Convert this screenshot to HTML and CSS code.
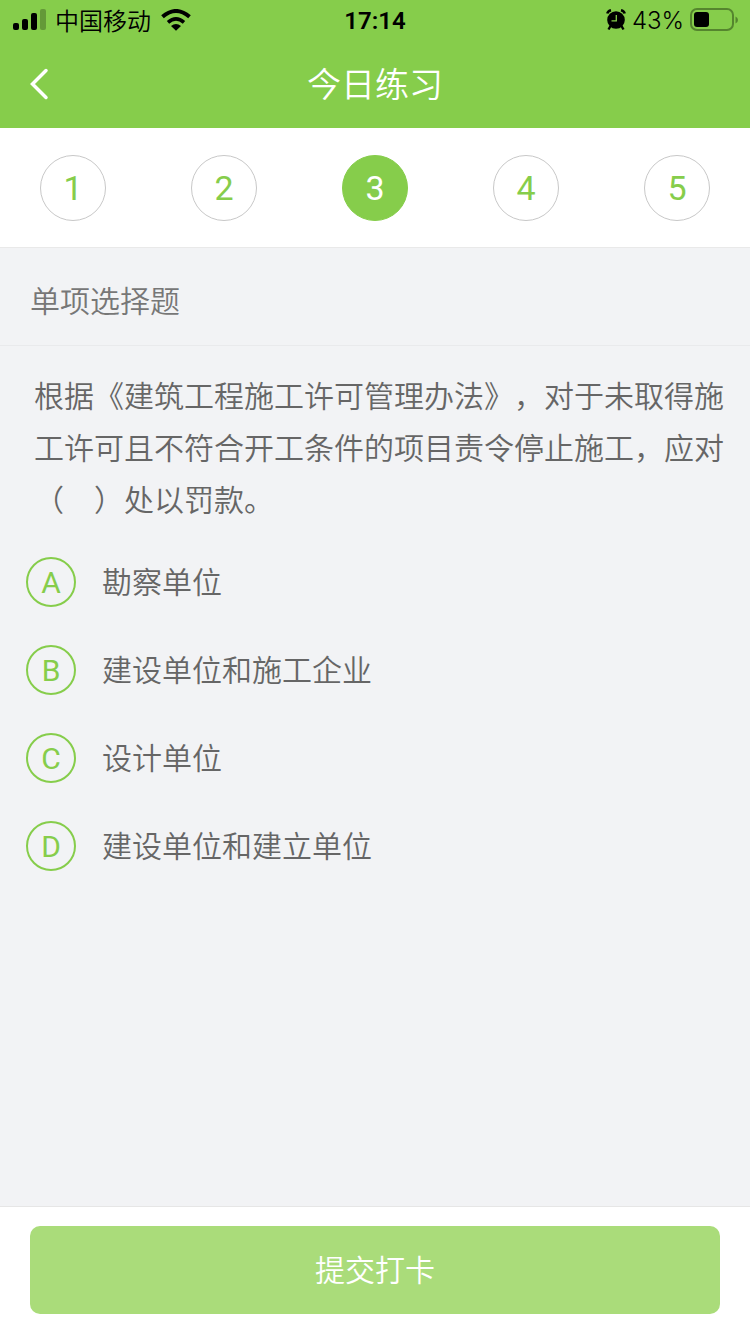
FILE: index.html
```html
<!DOCTYPE html>
<html lang="zh-CN">
<head>
<meta charset="utf-8">
<meta name="viewport" content="width=device-width, initial-scale=1">
<title>今日练习</title>
<link rel="stylesheet" href="styles.css">
</head>
<body>
<div class="app">
  <header class="header">
    <div class="status">
      <div class="status-side">
        <svg class="signal" width="34" height="22" viewBox="0 0 34 22" aria-hidden="true">
          <rect x="1" y="14" width="6" height="7" rx="2"/>
          <rect x="10" y="10" width="6" height="11" rx="2"/>
          <rect x="19" y="4" width="6" height="17" rx="2"/>
          <rect x="28" y="0" width="6" height="21" rx="2" opacity=".25"/>
        </svg>
        <span class="carrier">中国移动</span>
        <svg class="wifi" width="32" height="22" viewBox="0 0 32 22" fill="none" stroke="#000" aria-hidden="true">
          <path d="M2.500 7.800Q16-3.800 29.500 7.800" stroke-width="4"/>
          <path d="M8 13.300Q16 6.500 24 13.300" stroke-width="3.600"/>
          <path d="M16 21.800L11 17Q16 12.800 21 17Z" fill="#000" stroke="none"/>
        </svg>
      </div>
      <time class="clock">17:14</time>
      <div class="status-side status-right">
        <svg width="20" height="22" viewBox="0 0 20 22" aria-hidden="true">
          <circle cx="10" cy="11" r="8.800"/>
          <path d="M1.300 4.500Q2 2 5 1.300M18.700 4.500Q18 2 15 1.300" fill="none" stroke="#000" stroke-width="2.600"/>
          <path d="M4.500 17L2.500 20.500M15.500 17L17.500 20.500" stroke="#000" stroke-width="2.400"/>
          <path d="M10.300 6V11.800H5.500" fill="none" stroke="#86cd4b" stroke-width="1.300"/>
        </svg>
        <span class="percent">43%</span>
        <svg class="battery" width="48" height="24" viewBox="0 0 48 24" aria-hidden="true">
          <rect x="1" y="1" width="42" height="21" rx="6" fill="none" stroke="#55852e" stroke-width="2"/>
          <rect x="4" y="4" width="15" height="15" rx="3"/>
          <path d="M45.500 8.500Q48 9.500 48 12T45.500 15.500Z" fill="#55852e"/>
        </svg>
      </div>
    </div>
    <div class="titlebar">
      <button class="back" type="button" aria-label="返回">
        <svg width="20" height="32" viewBox="0 0 20 32" fill="none" stroke="#fff" stroke-width="3.500" stroke-linecap="round" aria-hidden="true">
          <path d="M16 2.500L2.500 16L16 29.500"/>
        </svg>
      </button>
      <h1 class="title">今日练习</h1>
    </div>
  </header>

  <nav class="steps" aria-label="题目">
    <button class="step" type="button">1</button>
    <button class="step" type="button">2</button>
    <button class="step step-current" type="button" aria-current="step">3</button>
    <button class="step" type="button">4</button>
    <button class="step" type="button">5</button>
  </nav>

  <main class="main">
    <h2 class="kind">单项选择题</h2>
    <p class="question" id="question">根据《建筑工程施工许可管理办法》，对于未取得施工许可且不符合开工条件的项目责令停止施工，应对（&#12288;）处以罚款。</p>
    <div class="options" role="radiogroup" aria-labelledby="question">
      <label class="option">
        <span class="badge"><input class="radio" type="radio" name="answer" value="A"><span class="letter">A</span></span>
        <span>勘察单位</span>
      </label>
      <label class="option">
        <span class="badge"><input class="radio" type="radio" name="answer" value="B"><span class="letter">B</span></span>
        <span>建设单位和施工企业</span>
      </label>
      <label class="option">
        <span class="badge"><input class="radio" type="radio" name="answer" value="C"><span class="letter">C</span></span>
        <span>设计单位</span>
      </label>
      <label class="option">
        <span class="badge"><input class="radio" type="radio" name="answer" value="D"><span class="letter">D</span></span>
        <span>建设单位和建立单位</span>
      </label>
    </div>
  </main>

  <footer class="footer">
    <button class="submit" type="button">提交打卡</button>
  </footer>
</div>
</body>
</html>
```

FILE: styles.css
```css
* {
  box-sizing: border-box;
}

body {
  margin: 0;
  font-family: Inter, "Noto Sans CJK SC", sans-serif;
  font-size: 30px;
  font-weight: 350;
  color: #666;
  background: #f2f3f5;
}

button {
  padding: 0;
  border: 0;
  font: inherit;
  cursor: pointer;
}

.app {
  display: flex;
  flex-direction: column;
  min-height: 100vh;
}

.header {
  background: #86cd4b;
}

.status {
  display: grid;
  grid-template-columns: 1fr auto 1fr;
  align-items: center;
  height: 40px;
  padding: 0 12px;
  font-size: 24px;
  line-height: 36px;
  color: #000;
}

.status-side {
  display: flex;
  align-items: center;
  gap: 9px;
}

.status-right {
  justify-content: flex-end;
  gap: 6px;
}

.carrier {
  padding-top: 4px;
}

.clock {
  padding-top: 1px;
  font-family: Roboto, sans-serif;
  font-weight: 600;
}

.percent {
  padding-top: 1px;
}

.titlebar {
  display: grid;
  grid-template-columns: 60px 1fr 60px;
  align-items: center;
  height: 88px;
}

.back {
  display: flex;
  align-items: center;
  height: 88px;
  padding-left: 30px;
  background: none;
}

.title {
  margin: 0;
  padding-top: 2px;
  font-size: 34px;
  font-weight: 350;
  line-height: 60px;
  text-align: center;
  color: #fff;
}

.steps {
  display: flex;
  justify-content: space-between;
  padding: 27px 40px 26px;
  border-bottom: 1px solid #e9e9e9;
  background: #fff;
}

.step {
  width: 66px;
  height: 66px;
  border: 1px solid #c8c8c8;
  border-radius: 50%;
  font-family: Roboto, sans-serif;
  font-size: 34px;
  font-weight: 400;
  color: #86cd4b;
  background: #fff;
}

.step-current {
  border-color: #86cd4b;
  color: #fff;
  background: #86cd4b;
}

.main {
  flex: 1;
}

.kind {
  margin: 0;
  padding: 30px 30px 21px;
  border-bottom: 1px solid #e9eaec;
  font-size: 30px;
  font-weight: 350;
  line-height: 46px;
  color: #777;
}

.question {
  margin: 0;
  padding: 24px 20px 0 34px;
  line-height: 52px;
  text-spacing-trim: space-all;
}

.options {
  display: flex;
  flex-direction: column;
  gap: 38px;
  padding: 31px 26px;
}

.option {
  display: flex;
  align-items: center;
  gap: 26px;
  line-height: 50px;
  cursor: pointer;
}

.badge {
  display: grid;
  flex: none;
  width: 50px;
  height: 50px;
}

.radio,
.letter {
  grid-area: 1 / 1;
}

.radio {
  width: 50px;
  height: 50px;
  margin: 0;
  border: 2px solid #86cd4b;
  border-radius: 50%;
  appearance: none;
}

.radio:checked {
  background: #86cd4b;
}

.letter {
  padding-top: 1px;
  font-family: Roboto, sans-serif;
  font-size: 30px;
  font-weight: 400;
  text-align: center;
  color: #86cd4b;
}

.radio:checked + .letter {
  color: #fff;
}

.footer {
  padding: 19px 30px 20px;
  border-top: 1px solid #e6e6e6;
  background: #fff;
}

.submit {
  width: 100%;
  height: 88px;
  padding-bottom: 4px;
  border-radius: 10px;
  color: #fff;
  background: #aadc7a;
}
```
